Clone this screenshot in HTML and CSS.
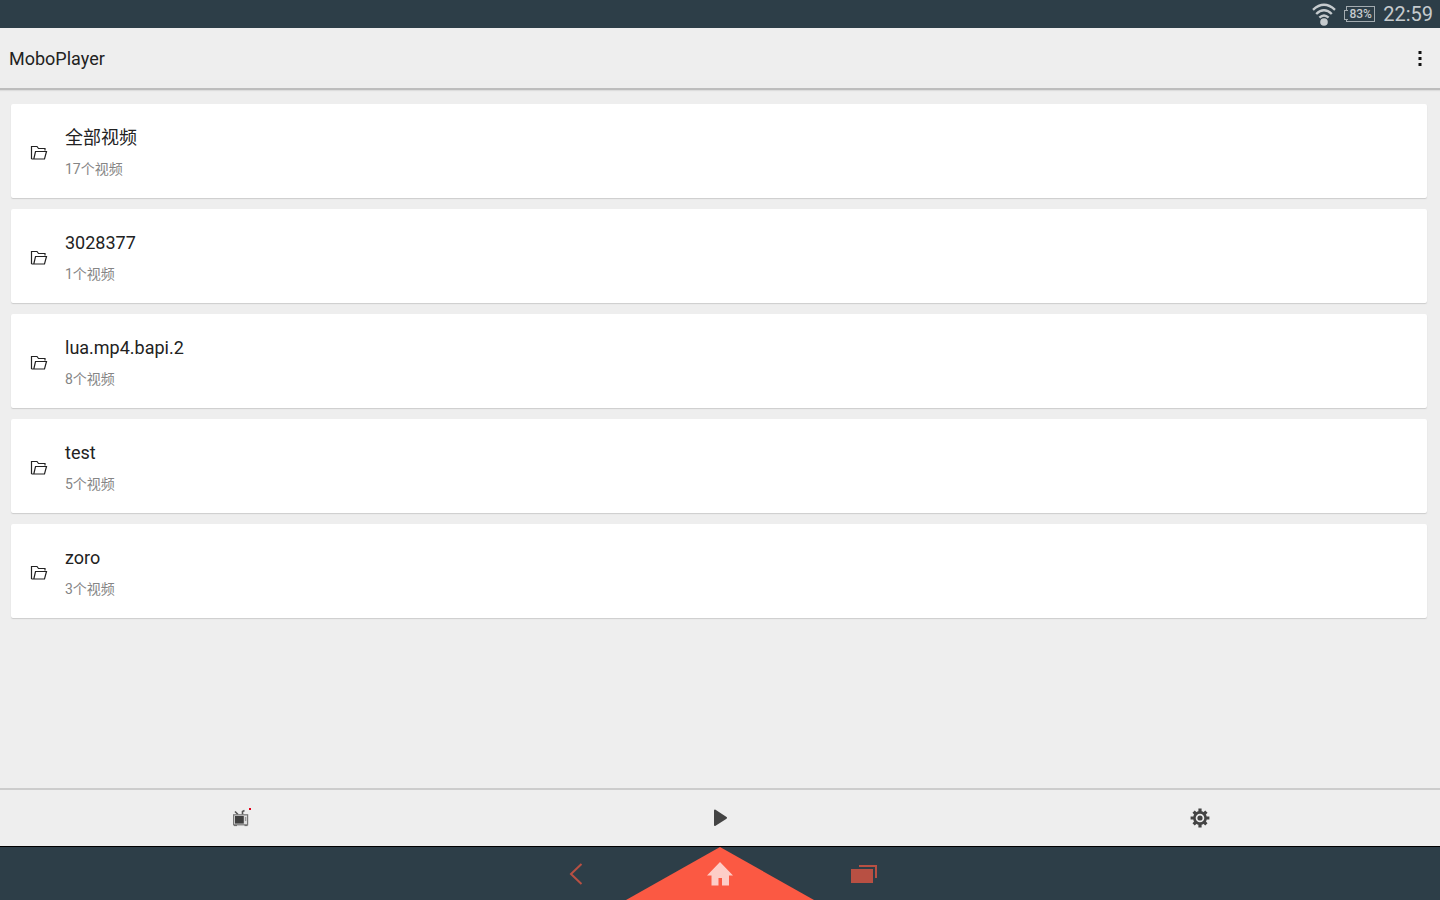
FILE: index.html
```html
<!DOCTYPE html>
<html lang="zh-CN">
<head>
    <meta charset="UTF-8">
    <meta name="viewport" content="width=device-width, initial-scale=1.0">
    <title>MoboPlayer</title>
    <link rel="stylesheet" href="styles.css">
</head>
<body>
    <!-- one folder glyph, reused by every row -->
    <svg class="sprite" aria-hidden="true">
        <symbol id="folder" viewBox="0 0 18 16">
            <path d="M1.5 14V1.5H7L8.5 3.5H15V5.5M1.5 14H14.5L16.5 6.5H5.5L3.8 14" fill="none" stroke="#222" stroke-width="1.2"/>
        </symbol>
    </svg>

    <div class="status-bar">
        <svg class="wifi" width="24" height="24" viewBox="0 0 24 24" aria-label="Wi-Fi">
            <g fill="none" stroke="#c6cbce" stroke-width="2.4">
                <path d="M1 7.8Q12 -2.2 23 7.8"/>
                <path d="M4.2 12Q12 4.6 19.8 12"/>
                <path d="M7.4 15.6Q12 11.2 16.6 15.6"/>
            </g>
            <circle cx="12" cy="20" r="3.8" fill="#c6cbce"/>
        </svg>
        <span class="battery">83%</span>
        <time class="clock">22:59</time>
    </div>

    <header class="app-bar">
        <h1>MoboPlayer</h1>
        <button class="more" type="button" aria-label="More options">
            <svg width="4" height="16" viewBox="0 0 4 16" fill="#111">
                <path d="M.5 1h3v3h-3zM.5 7h3v3h-3zM.5 13h3v3h-3z"/>
            </svg>
        </button>
    </header>

    <main>
        <ul class="folders">
            <li><a class="card" href="#all">
                <svg class="folder-icon"><use href="#folder"/></svg>
                <span class="info"><span class="name">全部视频</span><span class="count">17个视频</span></span>
            </a></li>
            <li><a class="card" href="#3028377">
                <svg class="folder-icon"><use href="#folder"/></svg>
                <span class="info"><span class="name">3028377</span><span class="count">1个视频</span></span>
            </a></li>
            <li><a class="card" href="#lua">
                <svg class="folder-icon"><use href="#folder"/></svg>
                <span class="info"><span class="name">lua.mp4.bapi.2</span><span class="count">8个视频</span></span>
            </a></li>
            <li><a class="card" href="#test">
                <svg class="folder-icon"><use href="#folder"/></svg>
                <span class="info"><span class="name">test</span><span class="count">5个视频</span></span>
            </a></li>
            <li><a class="card" href="#zoro">
                <svg class="folder-icon"><use href="#folder"/></svg>
                <span class="info"><span class="name">zoro</span><span class="count">3个视频</span></span>
            </a></li>
        </ul>
    </main>

    <nav class="tabs">
        <button type="button" aria-label="TV">
            <svg width="22" height="20" viewBox="0 0 22 20">
                <path d="M6 3.5L9 6.5M13.5 6.5V3.5L15.5 2.5" fill="none" stroke="#555" stroke-width="1.6"/>
                <rect x="4.6" y="6.8" width="14" height="10" fill="#ddd" stroke="#777" stroke-width="1.2"/>
                <rect x="6" y="8" width="8.8" height="7.6" fill="#3f3f3f"/>
                <path d="M16.6 9v4" stroke="#999" stroke-width="1.4"/>
                <path d="M5 17.6h3M15.5 17.6h3" stroke="#666"/>
                <rect x="20" y="0" width="2" height="2" fill="#e0001b"/>
            </svg>
        </button>
        <button type="button" aria-label="Play">
            <svg width="16" height="18" viewBox="0 0 16 18">
                <path d="M3 1.5L14 8.8L3 16Z" fill="#444" stroke="#444" stroke-width="2" stroke-linejoin="round"/>
            </svg>
        </button>
        <button type="button" aria-label="Settings">
            <svg width="20" height="20" viewBox="-10 -10 20 20">
                <g stroke="#444" stroke-width="3.2">
                    <path d="M0-9.4V-5M0 5V9.4M-9.4 0H-5M5 0H9.4"/>
                    <path d="M-6.4-6.4L-4-4M4 4L6.4 6.4M-6.4 6.4L-4 4M4-4L6.4-6.4"/>
                </g>
                <circle r="5.6" fill="#eee" stroke="#444" stroke-width="2.6"/>
                <circle r="2.6" fill="#444"/>
            </svg>
        </button>
    </nav>

    <footer class="system-bar">
        <button type="button" aria-label="Back">
            <svg width="14" height="22" viewBox="0 0 14 22">
                <path d="M12.5 1L2 11L12.5 21" fill="none" stroke="#b85043" stroke-width="2"/>
            </svg>
        </button>
        <button class="home" type="button" aria-label="Home">
            <svg width="26" height="24" viewBox="0 0 26 24">
                <path d="M13 0L26 13.5H22V23.5H15V16H11.5V23.5H4.5V13.5H0Z" fill="#fdcdc7"/>
            </svg>
        </button>
        <button type="button" aria-label="Recent apps">
            <svg width="26" height="18" viewBox="0 0 26 18">
                <path d="M0 4H22V18H0Z" fill="#b85043"/>
                <path d="M8 1H25V13" fill="none" stroke="#b85043" stroke-width="2"/>
            </svg>
        </button>
    </footer>
</body>
</html>
```
FILE: styles.css
```css
* {
    box-sizing: border-box;
}
body {
    display: flex;
    flex-direction: column;
    min-height: 100vh;
    margin: 0;
    background: #eee;
    color: #222;
    font-family: Roboto, "Noto Sans CJK SC", sans-serif;
}
button {
    display: flex;
    align-items: center;
    justify-content: center;
    padding: 0;
    border: 0;
    background: none;
    cursor: pointer;
}
.sprite {
    position: absolute;
    width: 0;
    height: 0;
}

/* Android status bar */
.status-bar {
    display: flex;
    align-items: center;
    justify-content: flex-end;
    height: 28px;
    padding-right: 7px;
    background: #2d3e48;
    color: #c6cbce;
}
.battery {
    position: relative;
    width: 29px;
    height: 16px;
    margin: 0 8px 0 10px;
    border: 1px solid #a3abb0;
    font-size: 12px;
    font-weight: 500;
    line-height: 15px;
    text-align: center;
}
.battery::before {
    content: "";
    position: absolute;
    left: -3px;
    top: 3px;
    width: 3px;
    height: 8px;
    border: 1px solid #a3abb0;
    border-right: 0;
    background: #2d3e48;
}
.clock {
    font-size: 20px;
    line-height: 30px;
}

/* Title bar */
.app-bar {
    display: flex;
    align-items: center;
    justify-content: space-between;
    height: 62px;
    padding: 0 10px 0 9px;
    border-bottom: 2px solid #bdbdbd;
    box-shadow: 0 1px 1px #ddd;
}
.app-bar h1 {
    margin: 0;
    font-size: 18px;
    font-weight: 400;
    line-height: 26px;
    padding-top: 2px;
}
.more {
    width: 20px;
    height: 32px;
}

/* Folder list */
main {
    flex: 1;
    padding: 14px 13px 14px 11px;
}
.folders {
    display: grid;
    gap: 11px;
    margin: 0;
    padding: 0;
    list-style: none;
}
.card {
    display: flex;
    align-items: center;
    gap: 17px;
    padding: 22px 19px 19px;
    border-radius: 2px;
    background: #fff;
    box-shadow: 0 1px 1px #ccc;
    color: inherit;
    text-decoration: none;
}
.folder-icon {
    width: 18px;
    height: 16px;
}
.info {
    display: grid;
    gap: 9px;
}
.name {
    font-size: 18px;
    line-height: 24px;
}
.count {
    color: #858585;
    font-size: 14px;
    line-height: 20px;
}

/* Bottom tabs */
.tabs {
    display: grid;
    grid-template-columns: repeat(3, 1fr);
    height: 58px;
    border-top: 2px solid #ccc;
}

/* System navigation */
.system-bar {
    display: grid;
    grid-template-columns: repeat(3, 144px);
    justify-content: center;
    height: 54px;
    border-top: 1px solid #000;
    background: #2d3e48;
}
.home {
    width: 188px;
    justify-self: center;
    background: #fb5943;
    clip-path: polygon(50% 0, 100% 100%, 0 100%);
}
```
